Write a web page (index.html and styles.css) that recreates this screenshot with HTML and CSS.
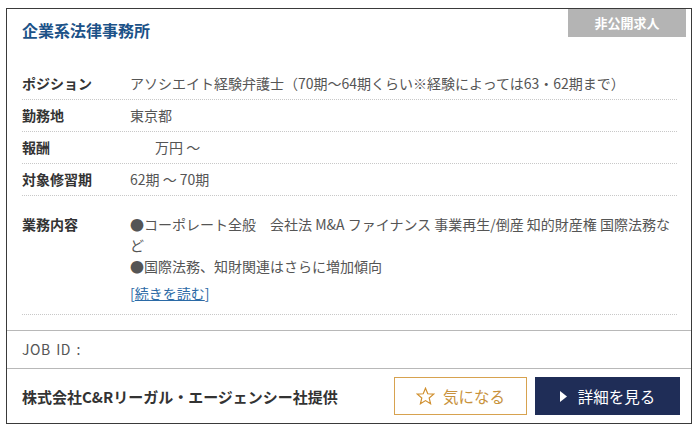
FILE: index.html
```html
<!DOCTYPE html>
<html lang="ja">
<head>
<meta charset="utf-8">
<title>企業系法律事務所</title>
<link rel="stylesheet" href="styles.css">
</head>
<body>
<div class="card">
  <div class="head">
    <h2 class="title">企業系法律事務所</h2>
    <span class="badge">非公開求人</span>
  </div>
  <dl class="rows">
    <div class="row">
      <dt class="label">ポジション</dt>
      <dd class="value">アソシエイト経験弁護士（70期〜64期くらい※経験によっては63・62期まで）</dd>
    </div>
    <div class="row">
      <dt class="label">勤務地</dt>
      <dd class="value">東京都</dd>
    </div>
    <div class="row">
      <dt class="label">報酬</dt>
      <dd class="value"><span class="pay">万円 〜</span></dd>
    </div>
    <div class="row">
      <dt class="label">対象修習期</dt>
      <dd class="value">62期 〜 70期</dd>
    </div>
    <div class="row row-desc">
      <dt class="label">業務内容</dt>
      <dd class="value">
        <p class="desc">●コーポレート全般　会社法 M&amp;A ファイナンス 事業再生/倒産 知的財産権 国際法務など</p>
        <p class="desc">●国際法務、知財関連はさらに増加傾向</p>
        <p class="more">[<a class="more-link" href="#">続きを読む</a>]</p>
      </dd>
    </div>
  </dl>
  <div class="jobid">JOB ID :</div>
  <div class="foot">
    <span class="company">株式会社C&amp;Rリーガル・エージェンシー社提供</span>
    <a class="btn btn-fav" href="#">
      <svg class="star" width="19" height="18" viewBox="0 0 24 23" aria-hidden="true">
        <polygon points="12,1.5 14.9,8.6 22.5,9.1 16.7,14 18.5,21.4 12,17.4 5.5,21.4 7.3,14 1.5,9.1 9.1,8.6" fill="none" stroke="#d08f2e" stroke-width="1.5" stroke-linejoin="miter"/>
      </svg>
      <span>気になる</span>
    </a>
    <a class="btn btn-detail" href="#">
      <svg class="tri" width="7" height="11" viewBox="0 0 7 11" aria-hidden="true">
        <polygon points="0,0 7,5.5 0,11" fill="#ffffff"/>
      </svg>
      <span>詳細を見る</span>
    </a>
  </div>
</div>
</body>
</html>
```

FILE: styles.css
```css
* { box-sizing: border-box; }

html, body {
  margin: 0;
  padding: 0;
  background: #ffffff;
}

body {
  font-family: "Noto Sans CJK JP", "Noto Sans", sans-serif;
  font-size: 14px;
  color: #555555;
}

.card {
  position: relative;
  margin: 8px 0 0 6px;
  width: 686px;
  height: 416px;
  border: 1px solid #3a3a3a;
  background: #ffffff;
}

.head {
  padding: 9px 15px 0 15px;
}

.title {
  margin: 0;
  font-size: 16px;
  line-height: 24px;
  font-weight: 700;
  color: #1c5288;
}

.badge {
  position: absolute;
  top: 0;
  right: 5px;
  width: 118px;
  height: 28px;
  background: #b4b4b4;
  color: #ffffff;
  font-size: 13px;
  font-weight: 700;
  line-height: 28px;
  text-align: center;
}

.rows {
  margin: 26px 14px 0 15px;
  padding: 0;
}

.row {
  display: grid;
  grid-template-columns: 108px 1fr;
  padding: 5px 0;
  line-height: 21px;
  border-bottom: 1px dotted #c8c8c8;
}

.label {
  margin: 0;
  font-weight: 700;
  color: #333333;
}

.value {
  margin: 0;
  color: #555555;
}

.pay {
  padding-left: 25px;
}

.row-desc {
  padding: 18px 0 10px 0;
}

.desc {
  margin: 0;
}

.more {
  margin: 6px 0 0 0;
  color: #2b6aa6;
}

.more-link {
  color: #2b6aa6;
  text-decoration: underline;
}

.jobid {
  margin-top: 15px;
  border-top: 1px solid #b8b8b8;
  padding: 8px 15px;
  line-height: 21px;
  color: #555555;
  letter-spacing: 0.5px;
  word-spacing: 2px;
}

.foot {
  display: flex;
  align-items: center;
  gap: 8px;
  border-top: 1px solid #b8b8b8;
  padding: 8px 11px 8px 15px;
}

.company {
  flex: 1;
  font-size: 15px;
  font-weight: 700;
  color: #333333;
}

.btn {
  display: flex;
  align-items: center;
  justify-content: center;
  height: 38px;
  font-size: 15.5px;
  text-decoration: none;
}

.btn-fav {
  width: 133px;
  gap: 8px;
  border: 1px solid #d7a24f;
  color: #c8923c;
  background: #ffffff;
}

.btn-detail {
  width: 145px;
  gap: 11px;
  background: #1f2d57;
  color: #ffffff;
}
```
